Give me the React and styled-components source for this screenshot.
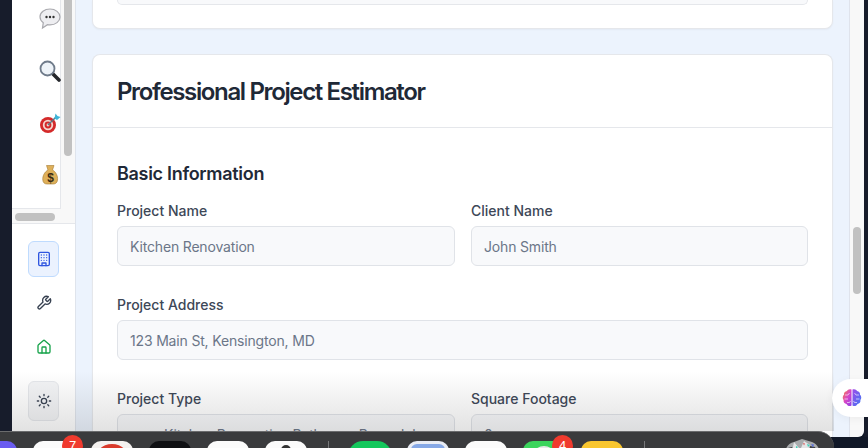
import React from "react";
import styled, { createGlobalStyle } from "styled-components";

const Global = createGlobalStyle`
  html, body { margin: 0; padding: 0; width: 868px; height: 448px; overflow: hidden; background: #111827; }
  * { box-sizing: border-box; }
  body { font-family: Inter, "Liberation Sans", sans-serif; }
`;
const Screen = styled.div`
  position: relative; width: 868px; height: 448px; overflow: hidden; background: #111827;
`;
const Window = styled.div`
  display: flex; height: 437px; overflow: hidden;
`;
const Edge = styled.div`
  width: ${p => p.$w}px; flex: none; background: #171c2b;
`;
const Sidebar = styled.aside`
  width: 64px; flex: none; display: flex; flex-direction: column;
  background: #fff; border-right: 1px solid #dfe4ec;
`;
const EmojiPane = styled.div`
  height: 224px; flex: none; display: flex; background: #f8f8f8;
  border-bottom: 1px solid #e5e7eb; position: relative;
`;
const EmojiList = styled.div`
  width: 49px; height: 209px; flex: none; background: #fff;
  border-right: 1px solid #e5e7eb; border-bottom: 1px solid #e5e7eb;
  display: flex; flex-direction: column; align-items: center;
  padding-top: 8px; padding-left: 27px;
`;
const EmojiSlot = styled.div`
  height: 52px; flex: none; width: 22px;
  display: flex; justify-content: center;
`;
const VThumb = styled.div`
  width: 8px; height: 156px; margin-left: 3px; border-radius: 0 0 4px 4px; background: #c1c1c1;
`;
const HThumb = styled.div`
  position: absolute; left: 3px; top: 213px; width: 40px; height: 8px;
  border-radius: 4px; background: #c1c1c1;
`;
const Nav = styled.nav`
  flex: 1; display: flex; flex-direction: column; align-items: center; padding-top: 17px;
`;
const NavButton = styled.div`
  width: 31px; height: ${p => p.$h || 36}px; flex: none; border-radius: 6px;
  display: flex; align-items: center; justify-content: center;
  margin-bottom: ${p => p.$mb || 8}px;
  background: ${p => p.$bg || "transparent"};
  border: 1px solid ${p => p.$bc || "transparent"};
`;
const Main = styled.main`
  flex: none; width: 774px; background: #ecf3fd; padding: 0 16px;
  display: flex; flex-direction: column; border-right: 1px solid #dfe3ec;
`;
const TopCard = styled.section`
  height: 29px; flex: none; background: #fff; border: 1px solid #e5e7eb; border-top: none;
  border-radius: 0 0 8px 8px; padding: 0 24px; box-shadow: 0 1px 2px rgba(0,0,0,.04);
`;
const TopInput = styled.div`
  height: 5px; background: #f8f9fb; border: 1px solid #e5e7eb; border-top: none; border-radius: 0 0 6px 6px;
`;
const Card = styled.section`
  margin-top: 25px; flex: 1; background: #fff; border: 1px solid #e5e7eb; border-bottom: none;
  border-radius: 8px 8px 0 0; box-shadow: 0 1px 2px rgba(0,0,0,.04);
`;
const CardHead = styled.header`
  height: 73px; padding: 2px 24px 0; display: flex; align-items: center; border-bottom: 1px solid #e5e7eb;
`;
const Title = styled.h1`
  margin: 0; font-size: 24px; line-height: 32px; font-weight: 570; letter-spacing: -1.36px; color: #1f2937;
`;
const CardBody = styled.div`
  padding: 32px 24px 0; display: flex; flex-direction: column;
`;
const Heading = styled.h2`
  margin: 0 0 13px; font-size: 18px; line-height: 28px; font-weight: 560; letter-spacing: -0.3px; color: #1f2937;
`;
const Grid = styled.div`
  display: grid; grid-template-columns: ${p => p.$one ? "1fr" : "338px 337px"}; column-gap: 16px; margin-bottom: 29px;
`;
const Field = styled.div`
  display: flex; flex-direction: column;
`;
const Label = styled.label`
  font-size: 14px; line-height: 20px; font-weight: 460; color: #3d4757; margin-bottom: 5px; height: 20px;
`;
const Input = styled.div`
  height: 40px; border: 1px solid #e0e3e8; border-radius: 6px; background: #f8f9fb;
  padding: 0 12px 0 ${p => p.$pl || 12}px;
  display: flex; align-items: center; font-size: 14px; color: #6b7688; letter-spacing: -0.17px;
`;
const ScrollRail = styled.div`
  width: 14px; flex: none; background: #f8f8f8; padding: 227px 3px 0; border-radius: 0 0 6px 0;
`;
const ScrollThumb = styled.div`
  width: 8px; height: 67px; border-radius: 4px; background: #c1c1c1;
`;
const Fade = styled.div`
  position: absolute; left: 12px; width: 822px; top: 371px; height: 60px; pointer-events: none;
  background: linear-gradient(to bottom, rgba(50,50,50,0), rgba(50,50,50,.14));
`;
const Floater = styled.div`
  position: absolute; left: 832px; top: 379px; width: 36px; height: 38px; border-radius: 19px 0 0 19px;
  background: #fff; display: flex; align-items: center; padding-left: 10px;
  box-shadow: 0 2px 8px rgba(0,0,0,.05);
`;
const Dock = styled.footer`
  position: absolute; left: 0; top: 431px; width: 834px; height: 24px;
  background: #3a3b3d; border-top: 1px solid #6a6b6d; border-radius: 0 16px 0 0;
`;
const DockApp = styled.div`
  position: absolute; top: 9px; left: ${p => p.$l}px; width: ${p => p.$w || 42}px; height: 30px;
  border-radius: ${p => p.$r || 10}px; background: ${p => p.$bg}; overflow: hidden;
`;
const Dot = styled.div`
  position: absolute; left: 50%; top: ${p => p.$t || 0}px; transform: translateX(-50%);
  width: ${p => p.$s}px; height: ${p => p.$s}px; border-radius: 50%; background: ${p => p.$bg};
`;
const Pane = styled.div`
  position: absolute; inset: 3px 4px 0; border-radius: 6px 6px 0 0; background: #86a8e6;
`;
const Badge = styled.div`
  position: absolute; top: 3px; left: ${p => p.$l}px; width: 21px; height: 21px; border-radius: 50%;
  background: #f03a2e; color: #fff; font-size: 13px; line-height: 21px; text-align: center; font-family: "Liberation Sans", sans-serif;
`;
const Sep = styled.div`
  position: absolute; top: 9px; left: ${p => p.$l}px; width: 1px; height: 20px; background: #77787a;
`;
const GemBox = styled.div`
  position: absolute; top: 4px; left: 782px; width: 40px; height: 14px;
`;

const Emoji = ({ children }) => <svg width="22" height="22" viewBox="0 0 22 22">{children}</svg>;

const Building = () => (
  <svg width="16" height="16" viewBox="0 0 24 24" fill="none" stroke="#2f55e0" strokeWidth="2" strokeLinecap="round" strokeLinejoin="round">
    <rect x="4" y="2" width="16" height="20" rx="2"/><path d="M9 22v-4h6v4M8 6h.01M16 6h.01M12 6h.01M12 10h.01M12 14h.01M16 10h.01M16 14h.01M8 10h.01M8 14h.01"/>
  </svg>
);
const Wrench = () => (
  <svg width="16" height="16" viewBox="0 0 24 24" fill="none" stroke="#374151" strokeWidth="2" strokeLinecap="round" strokeLinejoin="round">
    <path d="M14.7 6.3a1 1 0 0 0 0 1.4l1.6 1.6a1 1 0 0 0 1.4 0l3.77-3.77a6 6 0 0 1-7.94 7.94l-6.91 6.91a2.12 2.12 0 0 1-3-3l6.91-6.91a6 6 0 0 1 7.94-7.94l-3.76 3.76z"/>
  </svg>
);
const Home = () => (
  <svg width="16" height="16" viewBox="0 0 24 24" fill="none" stroke="#16a34a" strokeWidth="2" strokeLinecap="round" strokeLinejoin="round">
    <path d="M15 21v-8a1 1 0 0 0-1-1h-4a1 1 0 0 0-1 1v8"/><path d="M3 10a2 2 0 0 1 .709-1.528l7-5.999a2 2 0 0 1 2.582 0l7 5.999A2 2 0 0 1 21 10v9a2 2 0 0 1-2 2H5a2 2 0 0 1-2-2z"/>
  </svg>
);
const Sun = () => (
  <svg width="16" height="16" viewBox="0 0 24 24" fill="none" stroke="#374151" strokeWidth="2" strokeLinecap="round" strokeLinejoin="round">
    <circle cx="12" cy="12" r="4"/><path d="M12 2v2M12 20v2M4.93 4.93l1.41 1.41M17.66 17.66l1.41 1.41M2 12h2M20 12h2M6.34 17.66l-1.41 1.41M19.07 4.93l-1.41 1.41"/>
  </svg>
);
const Brain = () => (
  <svg width="20" height="20" viewBox="0 0 20 20">
    <defs>
      <linearGradient id="bl" x1="0" y1="0" x2="1" y2="1"><stop offset="0" stopColor="#f9843a"/><stop offset=".5" stopColor="#d846c8"/><stop offset="1" stopColor="#8b3fe8"/></linearGradient>
      <linearGradient id="br" x1="0" y1="0" x2="1" y2="1"><stop offset="0" stopColor="#a04be8"/><stop offset="1" stopColor="#3f78f5"/></linearGradient>
    </defs>
    <path d="M9.5 1.500C7.600.6 5.600 1.500 5 3 3 3.200 1.600 4.900 2 6.800.5 8 .3 10.600 1.600 12c-.4 2 .9 3.800 2.900 4 .7 1.900 3.200 2.800 5 1.500z" fill="url(#bl)"/>
    <path d="M10.500 1.500c1.900-.9 3.900 0 4.500 1.500 2 .2 3.400 1.900 3 3.800 1.500 1.200 1.700 3.800.4 5.200.4 2-.9 3.800-2.900 4-.7 1.900-3.200 2.800-5 1.500z" fill="url(#br)"/>
    <path d="M3 7h3l1.500-2M2.500 11H6M5 14.500h2.500l1-1.500M17 7h-3l-1.500-2M17.500 11H14M15 14.500h-2.500l-1-1.500" stroke="#fff" strokeOpacity=".75" strokeWidth=".8" fill="none"/>
  </svg>
);
const Gem = () => (
  <svg width="40" height="14" viewBox="0 0 40 14">
    <path d="M3 14 Q5 5 12 4 L20 1 L30 4 Q36 6 38 14z" fill="#a9abad"/>
    <path d="M12 4l5 6-7 4zM22 3l6 4-3 7-6-4z" fill="#e4e5e6"/>
    <path d="M6 10l4-1 2 5H5zM17 10l3 4h-5zM28 8l5 1 2 5h-7z" fill="#3d3f42"/>
    <path d="M14 8l2 1-2 2zM25 6l3 1-2 2z" fill="#3fd0b8"/>
    <path d="M29 6l3 .5-1 3z" fill="#5b6fd8"/>
    <path d="M21 5l2 .5-1 2z" fill="#d85a5a"/>
  </svg>
);

export default function App() {
  return (
    <Screen>
      <Global />
      <Window>
        <Edge $w={12} />
        <Sidebar>
          <EmojiPane>
            <EmojiList>
              <EmojiSlot>
                <Emoji>
                  <path d="M11 1C5.500 1 1 4.300 1 8.800c0 2.500 1.300 4.500 3.300 5.900L3.500 20l5-3.300c.8.100 1.600.2 2.500.2 5.500 0 10-3.500 10-7.900S16.500 1 11 1z" fill="#eeeef1" stroke="#a9a9ae" strokeWidth="1.200"/>
                  <circle cx="7.500" cy="9" r="1.200" fill="#333"/><circle cx="11" cy="9" r="1.200" fill="#333"/><circle cx="14.500" cy="9" r="1.200" fill="#333"/>
                </Emoji>
              </EmojiSlot>
              <EmojiSlot>
                <Emoji>
                  <path d="M13.500 13.500L20 20" stroke="#26282c" strokeWidth="3.600" strokeLinecap="round"/>
                  <circle cx="8.500" cy="8.500" r="7" fill="#eef3f8" stroke="#6f7b8a" strokeWidth="1.800"/>
                </Emoji>
              </EmojiSlot>
              <EmojiSlot>
                <Emoji>
                  <circle cx="9" cy="13" r="8" fill="#d42a2a"/><circle cx="9" cy="13" r="5.200" fill="#f4d8d0"/><circle cx="9" cy="13" r="3.400" fill="#d42a2a"/><circle cx="9" cy="13" r="1.400" fill="#f4d8d0"/>
                  <path d="M9 13L17 5" stroke="#5c7785" strokeWidth="1.400"/>
                  <path d="M15.500 6.500l1-5 2 2.500L21.500 5l-3.500 3z" fill="#3eb4d8"/>
                </Emoji>
              </EmojiSlot>
              <EmojiSlot>
                <Emoji>
                  <path d="M7.500 1.500h7.500l-1.500 4.500c3.500 2 5.500 6 5 10-.2 2.500-2 4-4 4h-6.500c-2.500 0-4-1.500-4.200-4-.4-4 1.700-8 5.200-10z" fill="#deb05a" stroke="#a67a30" strokeWidth=".6"/>
                  <text x="11.500" y="17.500" fontSize="12" fontWeight="700" textAnchor="middle" fill="#3a2b12" fontFamily="Liberation Sans">$</text>
                </Emoji>
              </EmojiSlot>
            </EmojiList>
            <VThumb />
            <HThumb />
          </EmojiPane>
          <Nav>
            <NavButton $bg="#ebf2fe" $bc="#bfdbfe"><Building /></NavButton>
            <NavButton><Wrench /></NavButton>
            <NavButton $mb={16}><Home /></NavButton>
            <NavButton $h={40} $bg="#f3f4f6" $bc="#e5e7eb"><Sun /></NavButton>
          </Nav>
        </Sidebar>
        <Main>
          <TopCard><TopInput /></TopCard>
          <Card>
            <CardHead><Title>Professional Project Estimator</Title></CardHead>
            <CardBody>
              <Heading>Basic Information</Heading>
              <Grid>
                <Field><Label>Project Name</Label><Input>Kitchen Renovation</Input></Field>
                <Field><Label>Client Name</Label><Input>John Smith</Input></Field>
              </Grid>
              <Grid $one>
                <Field><Label>Project Address</Label><Input>123 Main St, Kensington, MD</Input></Field>
              </Grid>
              <Grid>
                <Field><Label>Project Type</Label><Input $pl={46}>Kitchen Renovation Bathroom Remodel</Input></Field>
                <Field><Label>Square Footage</Label><Input>0</Input></Field>
              </Grid>
            </CardBody>
          </Card>
        </Main>
        <ScrollRail><ScrollThumb /></ScrollRail>
        <Edge $w={4} />
      </Window>
      <Fade />
      <Floater><Brain /></Floater>
      <Dock>
        <DockApp $l={-25} $bg="#6a5cf0" />
        <DockApp $l={33} $bg="#fbfbfb" />
        <Badge $l={62}>7</Badge>
        <DockApp $l={91} $bg="#f4f1ef"><Dot $s={36} $t={3} $bg="#d93a2b" /></DockApp>
        <DockApp $l={149} $bg="#0f1013" />
        <DockApp $l={207} $bg="#fbfbfb" />
        <DockApp $l={265} $bg="#fbfbfb"><Dot $s={10} $t={4} $bg="#333" /></DockApp>
        <Sep $l={328} />
        <DockApp $l={348} $w={44} $r={22} $bg="#14c75c" />
        <DockApp $l={407} $bg="#e9ecf4"><Pane /></DockApp>
        <DockApp $l={465} $bg="#fbfbfb" />
        <DockApp $l={523} $bg="#3bd45c"><Dot $s={24} $t={5} $bg="#e8e8e8" /></DockApp>
        <Badge $l={552}>4</Badge>
        <DockApp $l={581} $bg="#f9c62f" />
        <Sep $l={644} />
        <GemBox><Gem /></GemBox>
      </Dock>
    </Screen>
  );
}
